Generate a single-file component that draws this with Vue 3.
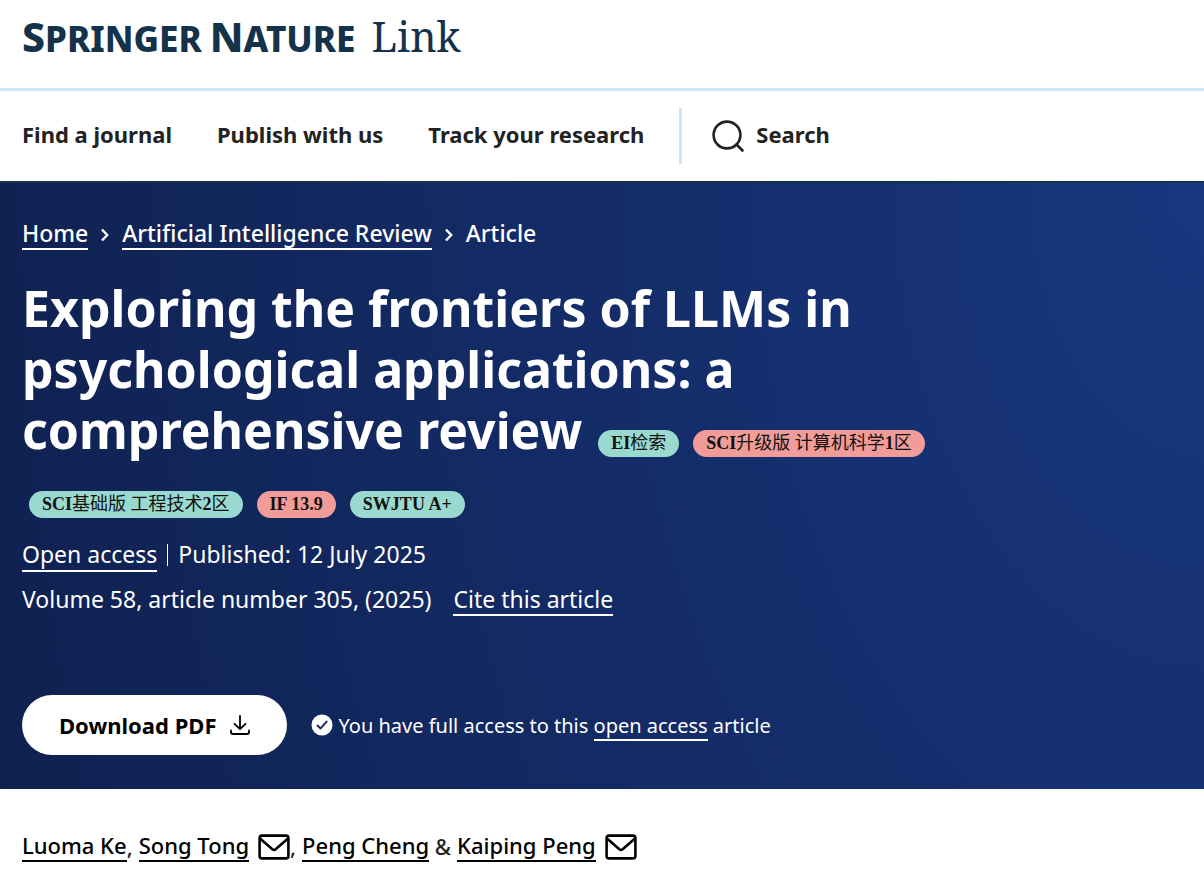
<template>
  <div class="page">
    <header class="header">
      <div class="brand">
        <a href="#" class="logo" aria-label="Springer Nature Link">
          <span class="logo-name"><span class="logo-cap">S</span>PRINGER</span>
          <span class="logo-name"><span class="logo-cap">N</span>ATURE</span>
          <span class="logo-link">Link</span>
        </a>
      </div>
      <nav class="nav">
        <a v-for="item in navItems" :key="item" href="#" class="nav-link">{{ item }}</a>
        <a href="#" class="search">
          <svg width="34" height="34" viewBox="0 0 34 34" fill="none" stroke="currentColor" stroke-width="2.6" stroke-linecap="round">
            <circle cx="16" cy="16" r="13.4" />
            <path d="M25.5 25.5 31.5 31.5" />
          </svg>
          <span class="nav-link">Search</span>
        </a>
      </nav>
    </header>

    <section class="hero">
      <nav class="breadcrumbs">
        <a href="#">Home</a>
        <svg class="chevron" width="8" height="14" viewBox="0 0 8 14" fill="none" stroke="currentColor" stroke-width="2.4">
          <path d="M1 1.5 6.2 7 1 12.5" />
        </svg>
        <a href="#">Artificial Intelligence Review</a>
        <svg class="chevron" width="8" height="14" viewBox="0 0 8 14" fill="none" stroke="currentColor" stroke-width="2.4">
          <path d="M1 1.5 6.2 7 1 12.5" />
        </svg>
        <span class="current">Article</span>
      </nav>

      <h1 class="title">
        Exploring the frontiers of LLMs in psychological applications: a comprehensive review
        <template v-for="(tag, i) in tags" :key="i"><span class="tag" :class="tag.color"><span v-for="(part, j) in tag.parts" :key="j" :class="{ han: j % 2 === 1 }">{{ part }}</span></span><wbr></template>
      </h1>

      <ul class="meta">
        <li><a href="#">Open access</a></li>
        <li class="published">Published: 12 July 2025</li>
      </ul>
      <div class="volume">
        <span>Volume 58, article number 305, (2025)</span>
        <a href="#">Cite this article</a>
      </div>

      <div class="actions">
        <a href="#" class="download">
          <span>Download PDF</span>
          <svg width="20" height="20" viewBox="0 0 20 20" fill="none" stroke="currentColor" stroke-width="1.8" stroke-linecap="round" stroke-linejoin="round">
            <path d="M10 1V14M4.5 8.8 10 14.2 15.5 8.8M1 15.5V17Q1 19 3 19H17Q19 19 19 17V15.5" />
          </svg>
        </a>
        <p class="access">
          <svg width="22" height="22" viewBox="0 0 22 22" fill="none">
            <circle cx="11" cy="11" r="10.5" fill="#fff" />
            <path d="M6.4 11.6 9.6 14.4 15.6 7.6" stroke="#13295f" stroke-width="2" stroke-linecap="round" stroke-linejoin="round" />
          </svg>
          <span>You have full access to this <a href="#">open access</a> article</span>
        </p>
      </div>
    </section>

    <main class="authors">
      <template v-for="author in authors" :key="author.name">
        <a href="#" class="author">{{ author.name }}</a>
        <svg v-if="author.mail" class="mail" width="32" height="26" viewBox="0 0 32 26" fill="none" stroke="currentColor" stroke-width="2.6" stroke-linejoin="round">
          <rect x="1.6" y="1.6" width="28.8" height="22.8" rx="2.5" />
          <path d="M2 4.5 14.4 15.2Q16 16.4 17.6 15.2L30 4.5" />
        </svg>
        <span v-if="author.after" class="separator">{{ author.after }}</span>
      </template>
    </main>
  </div>
</template>

<script setup>
const navItems = ['Find a journal', 'Publish with us', 'Track your research']

// Odd-numbered parts are Chinese text
const tags = [
  { color: 'green', parts: ['EI', '检索'] },
  { color: 'red', parts: ['SCI', '升级版 计算机科学', '1', '区'] },
  { color: 'green', parts: ['SCI', '基础版 工程技术', '2', '区'] },
  { color: 'red', parts: ['IF 13.9'] },
  { color: 'green', parts: ['SWJTU A+'] }
]

const authors = [
  { name: 'Luoma Ke', after: ',' },
  { name: 'Song Tong', mail: true, after: ',' },
  { name: 'Peng Cheng', after: ' &' },
  { name: 'Kaiping Peng', mail: true }
]
</script>

<style>
body {
  margin: 0;
  background: #fff;
}
</style>

<style scoped>
.page {
  font-family: 'Noto Sans', 'Open Sans', sans-serif;
  color: #222;
}

.brand {
  padding: 15px 22px 28px;
  border-bottom: 3px solid #cfe3f6;
}

.logo {
  display: flex;
  align-items: baseline;
  gap: 8px;
  color: #15324b;
  text-decoration: none;
  line-height: 43px;
}

.logo-name {
  font-size: 35px;
  font-weight: 800;
}

.logo-cap {
  font-size: 41px;
}

.logo-link {
  margin-left: 8px;
  font-family: 'Noto Serif', 'DejaVu Serif', serif;
  font-size: 41px;
}

.nav {
  display: flex;
  align-items: center;
  gap: 45px;
  padding: 17px 22px;
  border-bottom: 2px solid #15324b;
  font-size: 22px;
  font-weight: 700;
}

.nav a {
  color: #222;
  text-decoration: none;
}

.nav-link {
  padding-bottom: 4px;
}

.search {
  display: flex;
  align-items: center;
  gap: 11px;
  height: 56px;
  margin-left: -10px;
  padding-left: 29px;
  border-left: 3px solid #cfe3f6;
}

.hero {
  padding: 36px 22px 34px;
  color: #fff;
  background: radial-gradient(ellipse 105% 325% at top right, #18377f, #0f2150);
  font-size: 23px;
}

.breadcrumbs a,
.meta a,
.volume a,
.access a {
  color: inherit;
  text-decoration: none;
  border-bottom: 2px solid currentColor;
}

.breadcrumbs {
  display: flex;
  align-items: center;
  gap: 13px;
  font-weight: 500;
  line-height: 29px;
}

.current {
  border-bottom: 2px solid transparent;
}

.title {
  max-width: 920px;
  margin: 28px 0 0;
  font-size: 50px;
  font-weight: 700;
  line-height: 61px;
}

.tag {
  display: inline-block;
  margin: 0 7px;
  padding: 0 13px;
  border-radius: 14px;
  color: #111;
  font-family: 'Liberation Serif', 'Noto Sans CJK SC', serif;
  font-size: 18px;
  line-height: 27px;
  white-space: nowrap;
}

.tag:first-of-type {
  margin-left: 3px;
}

.han {
  font-weight: 400;
}

.green {
  background: #9ad9d0;
}

.red {
  background: #f29c99;
}

.meta {
  display: flex;
  margin: 18px 0 0;
  padding: 0;
  list-style: none;
  line-height: 29px;
}

.published::before {
  content: '';
  display: inline-block;
  width: 1px;
  height: 22px;
  margin: 0 10px;
  background: #fff;
  vertical-align: -3px;
}

.volume {
  display: flex;
  gap: 22px;
  margin-top: 16px;
  line-height: 29px;
}

.actions {
  display: flex;
  align-items: center;
  gap: 24px;
  margin-top: 79px;
}

.download {
  display: flex;
  align-items: center;
  gap: 13px;
  padding: 0 37px;
  border-radius: 30px;
  background: #fff;
  color: #000;
  font-size: 22px;
  font-weight: 700;
  line-height: 60px;
  text-decoration: none;
}

.access {
  display: flex;
  align-items: center;
  gap: 6px;
  margin: 0;
  font-size: 20px;
  line-height: 27px;
}

.authors {
  display: flex;
  align-items: center;
  padding: 42px 22px;
  font-size: 22px;
  font-weight: 500;
  line-height: 29px;
}

.author {
  color: #000;
  text-decoration: none;
  border-bottom: 2px solid #000;
}

.mail {
  margin-left: 9px;
  color: #000;
}

.separator {
  margin-right: 6px;
  white-space: pre;
}
</style>
